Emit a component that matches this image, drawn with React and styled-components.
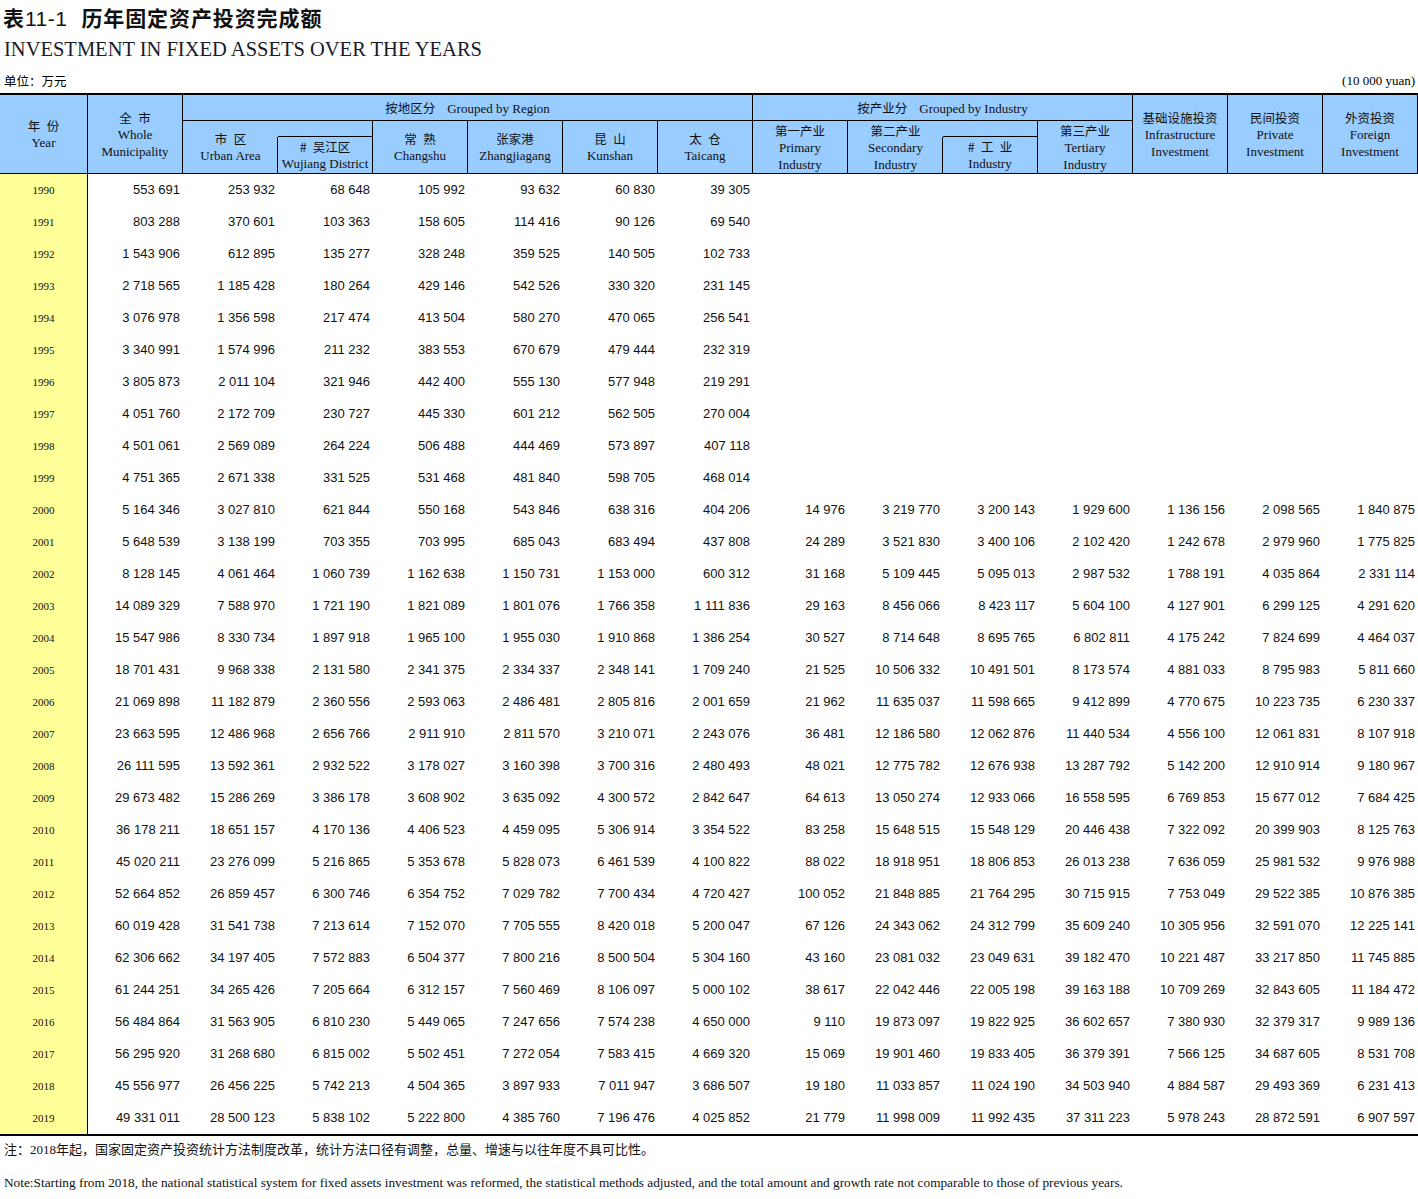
import React from "react";
import styled, { createGlobalStyle, css } from "styled-components";

const Global = createGlobalStyle`
  html, body { margin: 0; padding: 0; background: #fff; }
  body {
    font-family: "Liberation Serif", "Noto Sans CJK SC", serif;
    color: #000;
  }
`;

const Page = styled.div`
  width: 1418px;
  padding-bottom: 6px;
`;

const TitleZh = styled.h1`
  margin: 4px 0 0;
  padding-left: 3px;
  font-family: "Noto Sans CJK SC", sans-serif;
  font-weight: 700;
  font-size: 21px;
  letter-spacing: 0.9px;
  line-height: 26px;
  color: #111;
`;

const TitleNum = styled.span`
  font-family: "Liberation Sans", sans-serif;
  font-weight: 400;
  letter-spacing: 0.5px;
  margin-right: 14px;
`;

const TitleEn = styled.h2`
  margin: 4px 0 0;
  padding-left: 4px;
  font-family: "Liberation Serif", serif;
  font-weight: 400;
  font-size: 20.5px;
  line-height: 26px;
  color: #1a1a2a;
`;

const UnitBar = styled.div`
  margin-top: 11px;
  display: flex;
  justify-content: space-between;
  padding: 0 3px 0 4px;
  font-size: 13px;
  line-height: 16px;
`;

const UnitZh = styled.span`
  font-family: "Noto Sans CJK SC", sans-serif;
  font-size: 12.5px;
`;

const Table = styled.div`
  margin-top: 4px;
  width: 1418px;
`;

const cols = css`
  display: grid;
  grid-template-columns: 88px repeat(14, 95px);
`;

const Head = styled.div`
  ${cols};
  grid-template-rows: 26px 16px 37px;
  border-top: 2px solid #000;
  background: #99ccff;
`;

const HeadCell = styled.div`
  grid-column: ${(p) => p.$col} / span ${(p) => p.$cs || 1};
  grid-row: ${(p) => p.$row} / span ${(p) => p.$rs || 1};
  display: flex;
  flex-direction: column;
  align-items: center;
  justify-content: center;
  text-align: center;
  border-bottom: 1px solid #000;
  border-right: ${(p) => (p.$noRight ? "none" : "1px solid #000")};
  ${(p) =>
    p.$leftLine &&
    css`
      margin-left: -1px;
      border-left: 1px solid #000;
    `}
  font-size: 13px;
  line-height: 17px;
  white-space: nowrap;
  color: #111;
`;

const Zh = styled.span`
  font-family: "Noto Sans CJK SC", sans-serif;
  font-size: 12.5px;
`;

const GroupLabel = styled.span`
  margin-left: 12px;
`;

const Body = styled.div`
  border-bottom: 2px solid #000;
`;

const Row = styled.div`
  ${cols};
  height: 32px;
`;

const YearCell = styled.div`
  background: #ffff99;
  border-right: 1px solid #000;
  text-align: center;
  font-family: "Liberation Serif", serif;
  font-size: 11px;
  line-height: 32px;
  color: #111;
`;

const NumCell = styled.div`
  text-align: right;
  padding-right: 3px;
  font-family: "Liberation Sans", Arial, sans-serif;
  font-size: 13px;
  line-height: 32px;
  color: #111;
  white-space: nowrap;
`;

const NoteZh = styled.p`
  margin: 4px 0 0;
  padding-left: 4px;
  font-size: 13px;
  line-height: 20px;
  color: #111;
`;

const NoteEn = styled.p`
  margin: 13px 0 0;
  padding-left: 4px;
  font-family: "Liberation Serif", serif;
  font-size: 13.3px;
  line-height: 20px;
  color: #111;
  white-space: nowrap;
`;

const raw = `1990|553 691|253 932|68 648|105 992|93 632|60 830|39 305
1991|803 288|370 601|103 363|158 605|114 416|90 126|69 540
1992|1 543 906|612 895|135 277|328 248|359 525|140 505|102 733
1993|2 718 565|1 185 428|180 264|429 146|542 526|330 320|231 145
1994|3 076 978|1 356 598|217 474|413 504|580 270|470 065|256 541
1995|3 340 991|1 574 996|211 232|383 553|670 679|479 444|232 319
1996|3 805 873|2 011 104|321 946|442 400|555 130|577 948|219 291
1997|4 051 760|2 172 709|230 727|445 330|601 212|562 505|270 004
1998|4 501 061|2 569 089|264 224|506 488|444 469|573 897|407 118
1999|4 751 365|2 671 338|331 525|531 468|481 840|598 705|468 014
2000|5 164 346|3 027 810|621 844|550 168|543 846|638 316|404 206|14 976|3 219 770|3 200 143|1 929 600|1 136 156|2 098 565|1 840 875
2001|5 648 539|3 138 199|703 355|703 995|685 043|683 494|437 808|24 289|3 521 830|3 400 106|2 102 420|1 242 678|2 979 960|1 775 825
2002|8 128 145|4 061 464|1 060 739|1 162 638|1 150 731|1 153 000|600 312|31 168|5 109 445|5 095 013|2 987 532|1 788 191|4 035 864|2 331 114
2003|14 089 329|7 588 970|1 721 190|1 821 089|1 801 076|1 766 358|1 111 836|29 163|8 456 066|8 423 117|5 604 100|4 127 901|6 299 125|4 291 620
2004|15 547 986|8 330 734|1 897 918|1 965 100|1 955 030|1 910 868|1 386 254|30 527|8 714 648|8 695 765|6 802 811|4 175 242|7 824 699|4 464 037
2005|18 701 431|9 968 338|2 131 580|2 341 375|2 334 337|2 348 141|1 709 240|21 525|10 506 332|10 491 501|8 173 574|4 881 033|8 795 983|5 811 660
2006|21 069 898|11 182 879|2 360 556|2 593 063|2 486 481|2 805 816|2 001 659|21 962|11 635 037|11 598 665|9 412 899|4 770 675|10 223 735|6 230 337
2007|23 663 595|12 486 968|2 656 766|2 911 910|2 811 570|3 210 071|2 243 076|36 481|12 186 580|12 062 876|11 440 534|4 556 100|12 061 831|8 107 918
2008|26 111 595|13 592 361|2 932 522|3 178 027|3 160 398|3 700 316|2 480 493|48 021|12 775 782|12 676 938|13 287 792|5 142 200|12 910 914|9 180 967
2009|29 673 482|15 286 269|3 386 178|3 608 902|3 635 092|4 300 572|2 842 647|64 613|13 050 274|12 933 066|16 558 595|6 769 853|15 677 012|7 684 425
2010|36 178 211|18 651 157|4 170 136|4 406 523|4 459 095|5 306 914|3 354 522|83 258|15 648 515|15 548 129|20 446 438|7 322 092|20 399 903|8 125 763
2011|45 020 211|23 276 099|5 216 865|5 353 678|5 828 073|6 461 539|4 100 822|88 022|18 918 951|18 806 853|26 013 238|7 636 059|25 981 532|9 976 988
2012|52 664 852|26 859 457|6 300 746|6 354 752|7 029 782|7 700 434|4 720 427|100 052|21 848 885|21 764 295|30 715 915|7 753 049|29 522 385|10 876 385
2013|60 019 428|31 541 738|7 213 614|7 152 070|7 705 555|8 420 018|5 200 047|67 126|24 343 062|24 312 799|35 609 240|10 305 956|32 591 070|12 225 141
2014|62 306 662|34 197 405|7 572 883|6 504 377|7 800 216|8 500 504|5 304 160|43 160|23 081 032|23 049 631|39 182 470|10 221 487|33 217 850|11 745 885
2015|61 244 251|34 265 426|7 205 664|6 312 157|7 560 469|8 106 097|5 000 102|38 617|22 042 446|22 005 198|39 163 188|10 709 269|32 843 605|11 184 472
2016|56 484 864|31 563 905|6 810 230|5 449 065|7 247 656|7 574 238|4 650 000|9 110|19 873 097|19 822 925|36 602 657|7 380 930|32 379 317|9 989 136
2017|56 295 920|31 268 680|6 815 002|5 502 451|7 272 054|7 583 415|4 669 320|15 069|19 901 460|19 833 405|36 379 391|7 566 125|34 687 605|8 531 708
2018|45 556 977|26 456 225|5 742 213|4 504 365|3 897 933|7 011 947|3 686 507|19 180|11 033 857|11 024 190|34 503 940|4 884 587|29 493 369|6 231 413
2019|49 331 011|28 500 123|5 838 102|5 222 800|4 385 760|7 196 476|4 025 852|21 779|11 998 009|11 992 435|37 311 223|5 978 243|28 872 591|6 907 597`;

const rows = raw.split("\n").map((line) => line.split("|"));

const sp = "\u2002";

export default function App() {
  return (
    <Page>
      <Global />
      <TitleZh>
        表<TitleNum>11-1</TitleNum>历年固定资产投资完成额
      </TitleZh>
      <TitleEn>INVESTMENT IN FIXED ASSETS OVER THE YEARS</TitleEn>
      <UnitBar>
        <UnitZh>单位：万元</UnitZh>
        <span>(10 000 yuan)</span>
      </UnitBar>
      <Table>
        <Head>
          <HeadCell $col={1} $row={1} $rs={3}>
            <Zh>年{sp}份</Zh>
            <span>Year</span>
          </HeadCell>
          <HeadCell $col={2} $row={1} $rs={3}>
            <Zh>全{sp}市</Zh>
            <span>Whole</span>
            <span>Municipality</span>
          </HeadCell>
          <HeadCell $col={3} $row={1} $cs={6}>
            <span>
              <Zh>按地区分</Zh>
              <GroupLabel>Grouped by Region</GroupLabel>
            </span>
          </HeadCell>
          <HeadCell $col={9} $row={1} $cs={4}>
            <span>
              <Zh>按产业分</Zh>
              <GroupLabel>Grouped by Industry</GroupLabel>
            </span>
          </HeadCell>
          <HeadCell $col={13} $row={1} $rs={3}>
            <Zh>基础设施投资</Zh>
            <span>Infrastructure</span>
            <span>Investment</span>
          </HeadCell>
          <HeadCell $col={14} $row={1} $rs={3}>
            <Zh>民间投资</Zh>
            <span>Private</span>
            <span>Investment</span>
          </HeadCell>
          <HeadCell $col={15} $row={1} $rs={3}>
            <Zh>外资投资</Zh>
            <span>Foreign</span>
            <span>Investment</span>
          </HeadCell>

          <HeadCell $col={3} $row={2} $rs={2} $noRight>
            <Zh>市{sp}区</Zh>
            <span>Urban Area</span>
          </HeadCell>
          <HeadCell $col={4} $row={2} />
          <HeadCell $col={4} $row={3} $leftLine>
            <Zh>#{sp}吴江区</Zh>
            <span>Wujiang District</span>
          </HeadCell>
          <HeadCell $col={5} $row={2} $rs={2}>
            <Zh>常{sp}熟</Zh>
            <span>Changshu</span>
          </HeadCell>
          <HeadCell $col={6} $row={2} $rs={2}>
            <Zh>张家港</Zh>
            <span>Zhangjiagang</span>
          </HeadCell>
          <HeadCell $col={7} $row={2} $rs={2}>
            <Zh>昆{sp}山</Zh>
            <span>Kunshan</span>
          </HeadCell>
          <HeadCell $col={8} $row={2} $rs={2}>
            <Zh>太{sp}仓</Zh>
            <span>Taicang</span>
          </HeadCell>
          <HeadCell $col={9} $row={2} $rs={2}>
            <Zh>第一产业</Zh>
            <span>Primary</span>
            <span>Industry</span>
          </HeadCell>
          <HeadCell $col={10} $row={2} $rs={2} $noRight>
            <Zh>第二产业</Zh>
            <span>Secondary</span>
            <span>Industry</span>
          </HeadCell>
          <HeadCell $col={11} $row={2} />
          <HeadCell $col={11} $row={3} $leftLine>
            <Zh>#{sp}工{sp}业</Zh>
            <span>Industry</span>
          </HeadCell>
          <HeadCell $col={12} $row={2} $rs={2}>
            <Zh>第三产业</Zh>
            <span>Tertiary</span>
            <span>Industry</span>
          </HeadCell>
        </Head>
        <Body>
          {rows.map(([year, ...vals]) => (
            <Row key={year}>
              <YearCell>{year}</YearCell>
              {Array.from({ length: 14 }, (_, i) => (
                <NumCell key={i}>{vals[i] || ""}</NumCell>
              ))}
            </Row>
          ))}
        </Body>
      </Table>
      <NoteZh>
        注：2018年起，国家固定资产投资统计方法制度改革，统计方法口径有调整，总量、增速与以往年度不具可比性。
      </NoteZh>
      <NoteEn>
        Note:Starting from 2018, the national statistical system for fixed assets investment was reformed, the statistical methods adjusted, and the total amount and growth rate not comparable to those of previous years.
      </NoteEn>
    </Page>
  );
}
